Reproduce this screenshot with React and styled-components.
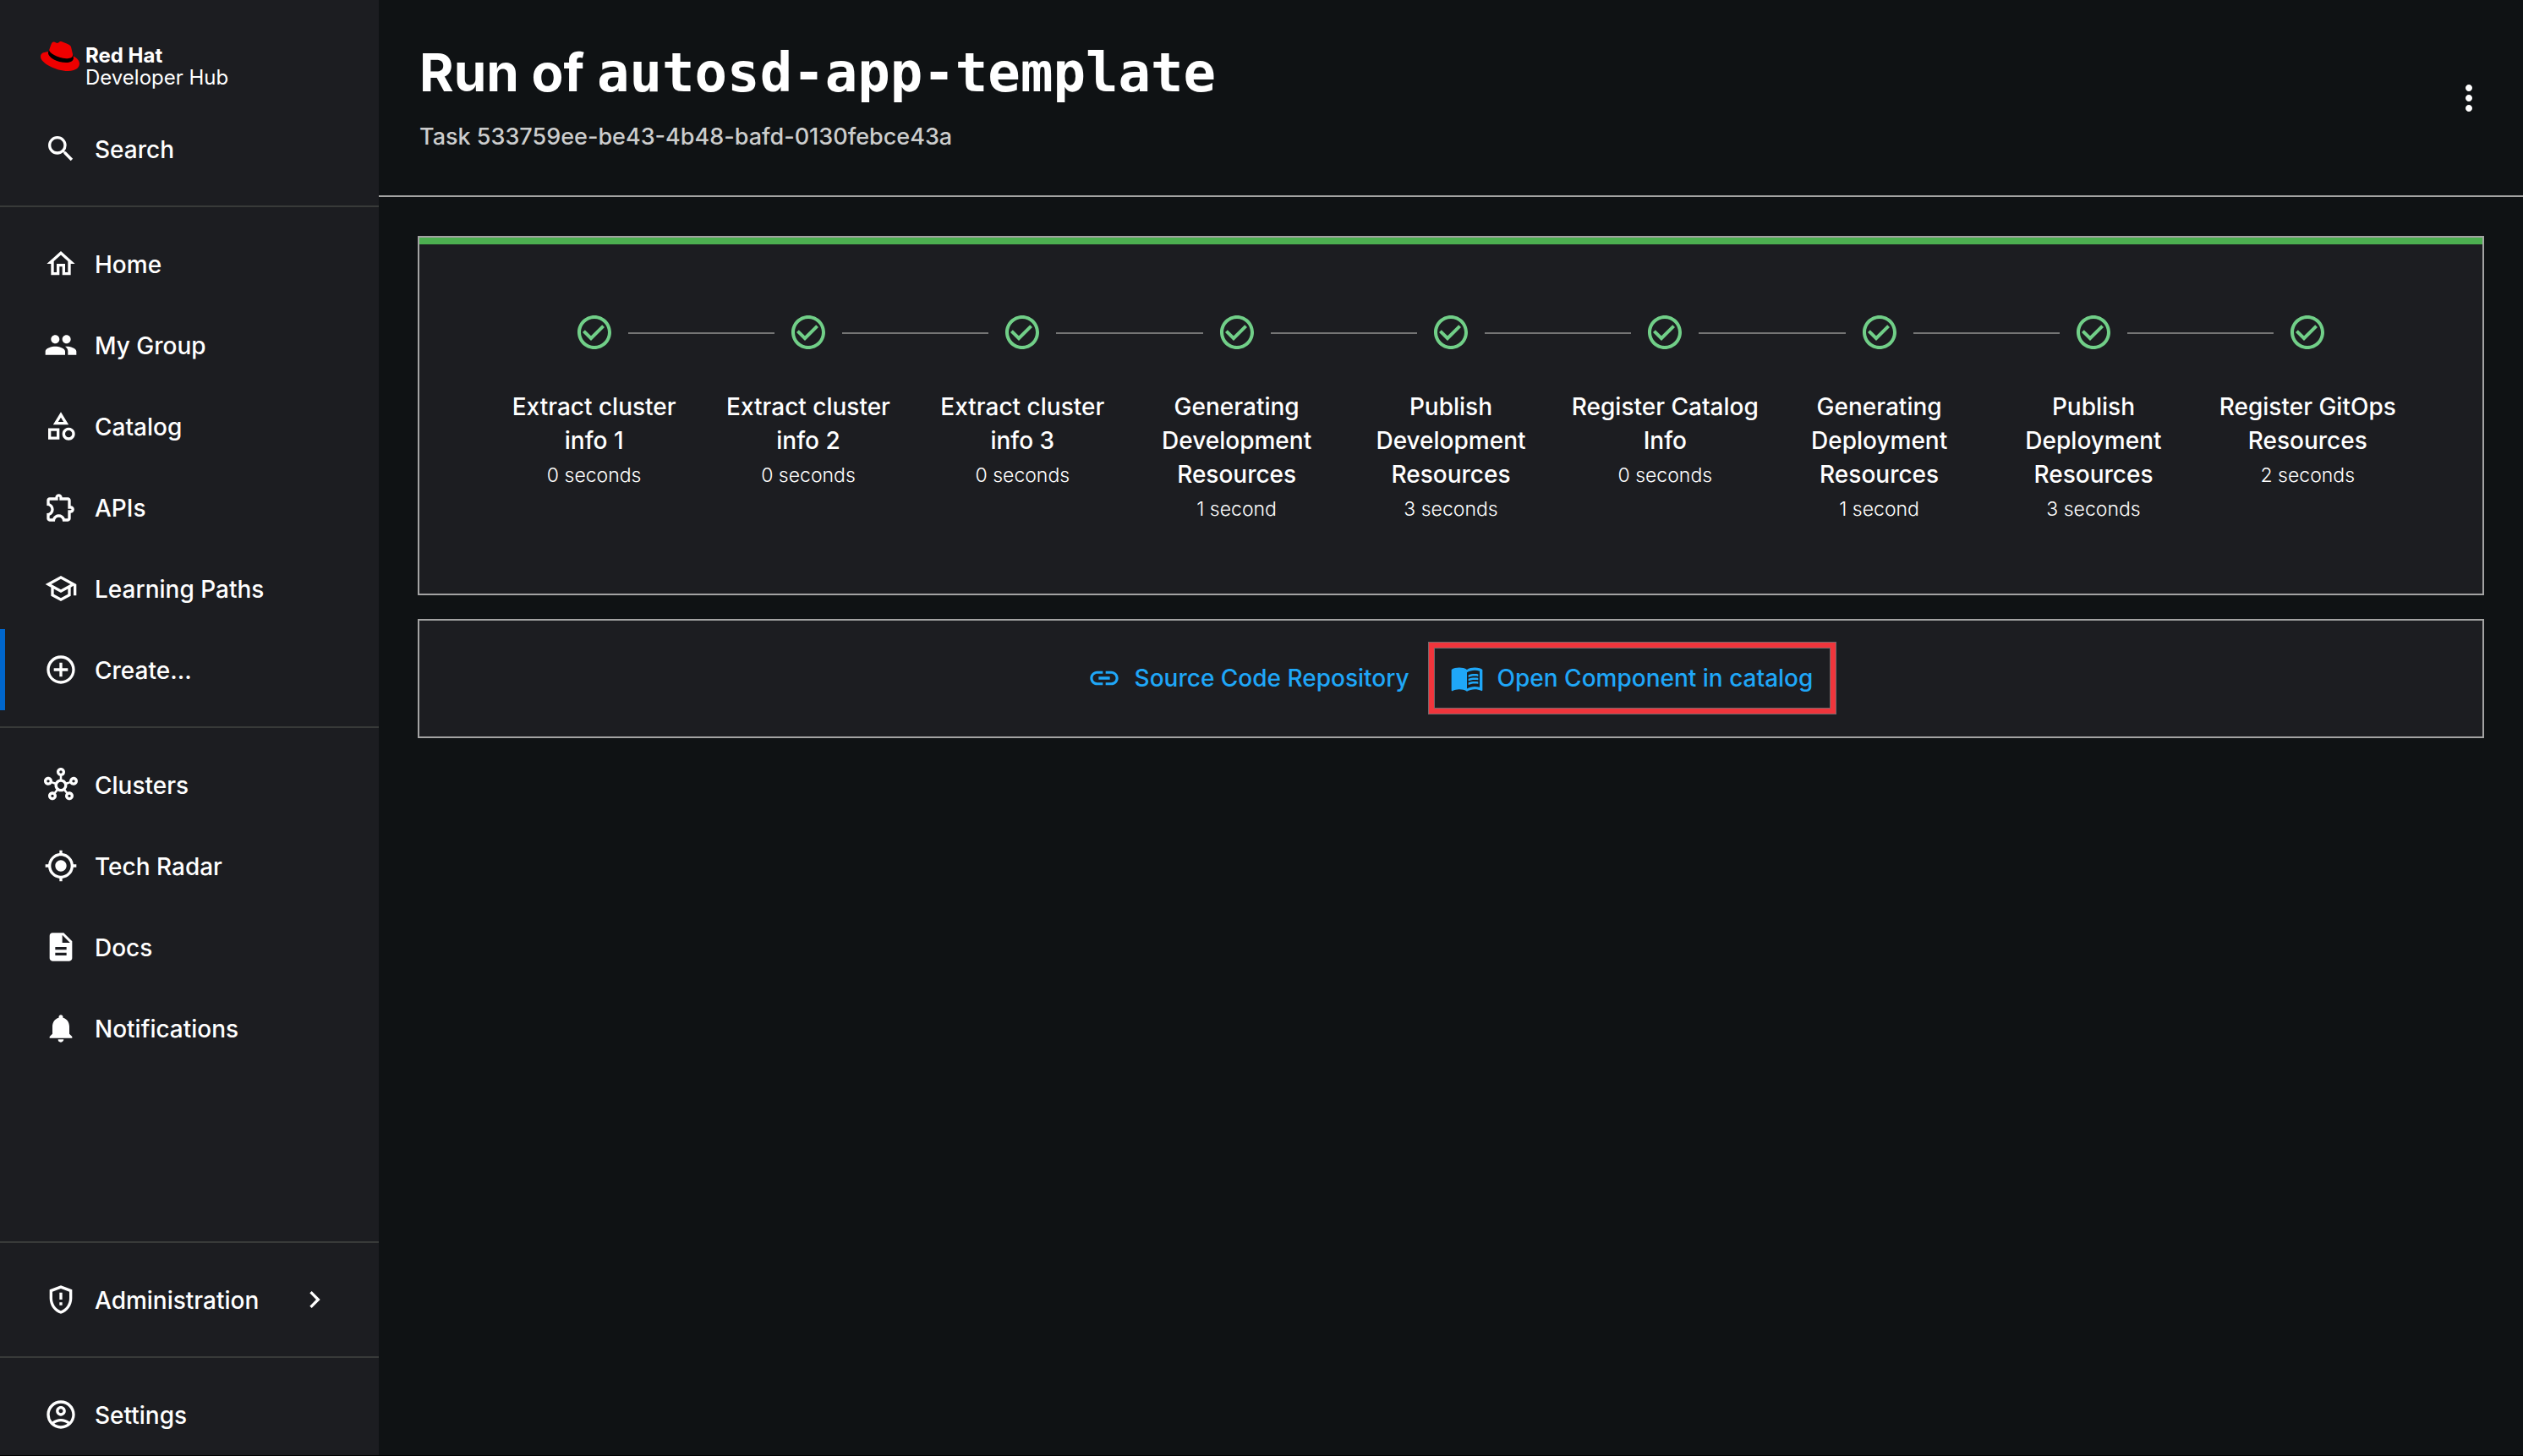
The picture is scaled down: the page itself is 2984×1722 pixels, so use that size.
import React from "react";
import styled, { createGlobalStyle } from "styled-components";
import {
  MdAddCircleOutline,
  MdCheckCircleOutline,
  MdChevronRight,
  MdDescription,
  MdLink,
  MdMenuBook,
  MdMoreVert,
  MdMyLocation,
  MdNotifications,
  MdOutlineAccountCircle,
  MdOutlineCategory,
  MdOutlineExtension,
  MdOutlineGppMaybe,
  MdOutlineHome,
  MdOutlineHub,
  MdOutlineSchool,
  MdPeople,
  MdSearch,
} from "react-icons/md";

const GlobalStyle = createGlobalStyle`
  *, *::before, *::after { box-sizing: border-box; }
  body {
    margin: 0;
    background: #0f1214;
    color: #fff;
    font-family: Inter, "Liberation Sans", sans-serif;
    font-size: 28px;
    font-weight: 500;
    line-height: 40px;
  }
`;

const Shell = styled.div`
  display: flex;
  min-height: 100vh;
  border-bottom: 1px solid #000;
`;

const Sidebar = styled.nav`
  display: flex;
  flex: 0 0 448px;
  flex-direction: column;
  background: #1c1d21;
`;

const Logo = styled.a`
  display: flex;
  align-items: flex-start;
  gap: 7px;
  height: 128px;
  padding: 49px 48px 0;
  color: #fff;
  text-decoration: none;
`;

const LogoText = styled.span`
  display: flex;
  flex-direction: column;
  padding-top: 4px;
  font-size: 24px;
  font-weight: 400;
  line-height: 26px;

  strong {
    font-weight: 700;
  }
`;

const NavList = styled.ul`
  margin: 0;
  padding: 0;
  list-style: none;
`;

const NavEntry = styled.a`
  display: flex;
  align-items: center;
  gap: 20px;
  width: 100%;
  height: 96px;
  padding: 0 56px 0 46px;
  border: 0;
  border-left: 6px solid ${({ $active }) => ($active ? "#0066cc" : "transparent")};
  background: none;
  color: #fff;
  font: inherit;
  text-align: left;
  text-decoration: none;
  cursor: pointer;
`;

const NavLabel = styled.span`
  flex: 1;
  padding-top: 2px;
`;

const Divider = styled.hr`
  width: 100%;
  height: 2px;
  margin: 19px 0;
  border: 0;
  background: #383a39;
`;

const Spacer = styled.div`
  flex: 1;
`;

const Main = styled.main`
  flex: 1;
  min-width: 0;
`;

const Header = styled.header`
  display: flex;
  align-items: center;
  justify-content: space-between;
  padding: 50px 40px 49px 48px;
  border-bottom: 2px solid #a3a3a3;
`;

const Title = styled.h1`
  margin: 0 0 20px;
  font-size: 62px;
  font-weight: 700;
  line-height: 72px;

  code {
    font-family: "DejaVu Sans Mono", "Liberation Mono", monospace;
    font-size: 64px;
    line-height: 64px;
  }
`;

const Subtitle = styled.p`
  margin: 0;
  color: #cccdcd;
  font-size: 27px;
`;

const IconButton = styled.button`
  display: flex;
  padding: 0;
  border: 0;
  background: none;
  color: #fff;
  cursor: pointer;
`;

const Content = styled.div`
  display: flex;
  flex-direction: column;
  gap: 28px;
  padding: 46px;
`;

const Card = styled.section`
  border: 2px solid #a3a3a3;
  background: #1c1d21;
`;

const Progress = styled.div`
  height: 8px;
  background: #4caf50;
`;

const Steps = styled.ol`
  display: flex;
  margin: 0;
  padding: 80px 80px 79px;
  list-style: none;
`;

const Step = styled.li`
  flex: 1 1 0;
  min-width: 0;
  text-align: center;
`;

const StepTrack = styled.div`
  display: flex;
  align-items: center;
  gap: 16px;
  margin-bottom: 44px;
  color: #71cf88;
`;

const Connector = styled.span`
  flex: 1;
  height: 4px;
  border-bottom: 2px solid ${({ $hidden }) => ($hidden ? "transparent" : "#757575")};
`;

const StepLabel = styled.div`
  padding: 0 8px;
`;

const StepDuration = styled.div`
  font-size: 23px;
  font-weight: 300;
  line-height: 42px;
`;

const Outputs = styled(Card)`
  display: flex;
  justify-content: center;
  gap: 10px;
  padding: 33px 0 34px;
`;

const OutputLink = styled.a`
  position: relative;
  display: flex;
  align-items: center;
  gap: 16px;
  height: 70px;
  padding: 0 20px 0 18px;
  color: #1fa7f8;
  text-decoration: none;
`;

const Highlight = styled.span`
  position: absolute;
  inset: -7px;
  border: 6px solid #f0353c;
  box-shadow: 0 0 0 1px #75696c, inset 0 0 0 1px #75696c;
  pointer-events: none;
`;

const primaryNav = [
  { label: "Home", icon: MdOutlineHome },
  { label: "My Group", icon: MdPeople },
  { label: "Catalog", icon: MdOutlineCategory },
  { label: "APIs", icon: MdOutlineExtension },
  { label: "Learning Paths", icon: MdOutlineSchool },
  { label: "Create...", icon: MdAddCircleOutline, active: true },
];

const secondaryNav = [
  { label: "Clusters", icon: MdOutlineHub },
  { label: "Tech Radar", icon: MdMyLocation },
  { label: "Docs", icon: MdDescription },
  { label: "Notifications", icon: MdNotifications },
];

const steps = [
  { label: "Extract cluster info 1", duration: "0 seconds" },
  { label: "Extract cluster info 2", duration: "0 seconds" },
  { label: "Extract cluster info 3", duration: "0 seconds" },
  { label: "Generating Development Resources", duration: "1 second" },
  { label: "Publish Development Resources", duration: "3 seconds" },
  { label: "Register Catalog Info", duration: "0 seconds" },
  { label: "Generating Deployment Resources", duration: "1 second" },
  { label: "Publish Deployment Resources", duration: "3 seconds" },
  { label: "Register GitOps Resources", duration: "2 seconds" },
];

function HatIcon() {
  return (
    <svg width="46" height="35" viewBox="0 2.9 24 18.2" aria-hidden="true">
      <path
        fill="#000"
        d="M19.83 10.75l.28 1.2c.218 1.032.218 1.14.218 1.277 0 1.765-1.984 2.745-4.593 2.745-5.895.004-11.06-3.451-11.06-5.734a2.326 2.326 0 0 1 .19-.925l.6-1.4z"
      />
      <path
        fill="#e00"
        d="M16.009 13.386c1.577 0 3.86-.326 3.86-2.202a1.765 1.765 0 0 0-.04-.431l-.94-4.08c-.216-.898-.406-1.305-1.982-2.093-1.223-.625-3.888-1.658-4.676-1.658-.733 0-.947.946-1.822.946-.842 0-1.467-.706-2.255-.706-.757 0-1.25.515-1.63 1.576 0 0-1.06 2.99-1.197 3.424a.81.81 0 0 0-.028.245c0 1.162 4.577 4.974 10.71 4.974m4.101-1.435c.218 1.032.218 1.14.218 1.277 0 1.765-1.984 2.745-4.593 2.745-5.895.004-11.06-3.451-11.06-5.734a2.326 2.326 0 0 1 .19-.925C2.746 9.415 0 9.794 0 12.217c0 3.969 9.405 8.861 16.851 8.861 5.71 0 7.149-2.582 7.149-4.62 0-1.605-1.387-3.425-3.887-4.512"
      />
    </svg>
  );
}

function NavItem({ label, icon: Icon, active }) {
  return (
    <NavEntry href="#" $active={active} aria-current={active ? "page" : undefined}>
      <Icon size={40} aria-hidden="true" />
      <NavLabel>{label}</NavLabel>
    </NavEntry>
  );
}

function NavGroup({ items }) {
  return (
    <NavList>
      {items.map((item) => (
        <li key={item.label}>
          <NavItem {...item} />
        </li>
      ))}
    </NavList>
  );
}

export default function App() {
  return (
    <>
      <GlobalStyle />
      <Shell>
        <Sidebar aria-label="Main">
          <Logo href="#">
            <HatIcon />
            <LogoText>
              <strong>Red Hat</strong>
              <span>Developer Hub</span>
            </LogoText>
          </Logo>
          <NavEntry as="button" type="button">
            <MdSearch size={40} aria-hidden="true" />
            <NavLabel>Search</NavLabel>
          </NavEntry>
          <Divider />
          <NavGroup items={primaryNav} />
          <Divider />
          <NavGroup items={secondaryNav} />
          <Spacer />
          <Divider />
          <NavEntry as="button" type="button" aria-expanded="false">
            <MdOutlineGppMaybe size={40} aria-hidden="true" />
            <NavLabel>Administration</NavLabel>
            <MdChevronRight size={40} aria-hidden="true" />
          </NavEntry>
          <Divider />
          <NavItem label="Settings" icon={MdOutlineAccountCircle} />
        </Sidebar>

        <Main>
          <Header>
            <div>
              <Title>
                Run of <code>autosd-app-template</code>
              </Title>
              <Subtitle>Task 533759ee-be43-4b48-bafd-0130febce43a</Subtitle>
            </div>
            <IconButton type="button" aria-label="More options">
              <MdMoreVert size={48} aria-hidden="true" />
            </IconButton>
          </Header>

          <Content>
            <Card>
              <Progress />
              <Steps>
                {steps.map((step, index) => (
                  <Step key={step.label}>
                    <StepTrack>
                      <Connector $hidden={index === 0} />
                      <MdCheckCircleOutline size={48} aria-hidden="true" />
                      <Connector $hidden={index === steps.length - 1} />
                    </StepTrack>
                    <StepLabel>{step.label}</StepLabel>
                    <StepDuration>{step.duration}</StepDuration>
                  </Step>
                ))}
              </Steps>
            </Card>

            <Outputs>
              <OutputLink href="#">
                <MdLink size={40} aria-hidden="true" />
                Source Code Repository
              </OutputLink>
              <OutputLink href="#">
                <MdMenuBook size={40} aria-hidden="true" />
                Open Component in catalog
                <Highlight />
              </OutputLink>
            </Outputs>
          </Content>
        </Main>
      </Shell>
    </>
  );
}
